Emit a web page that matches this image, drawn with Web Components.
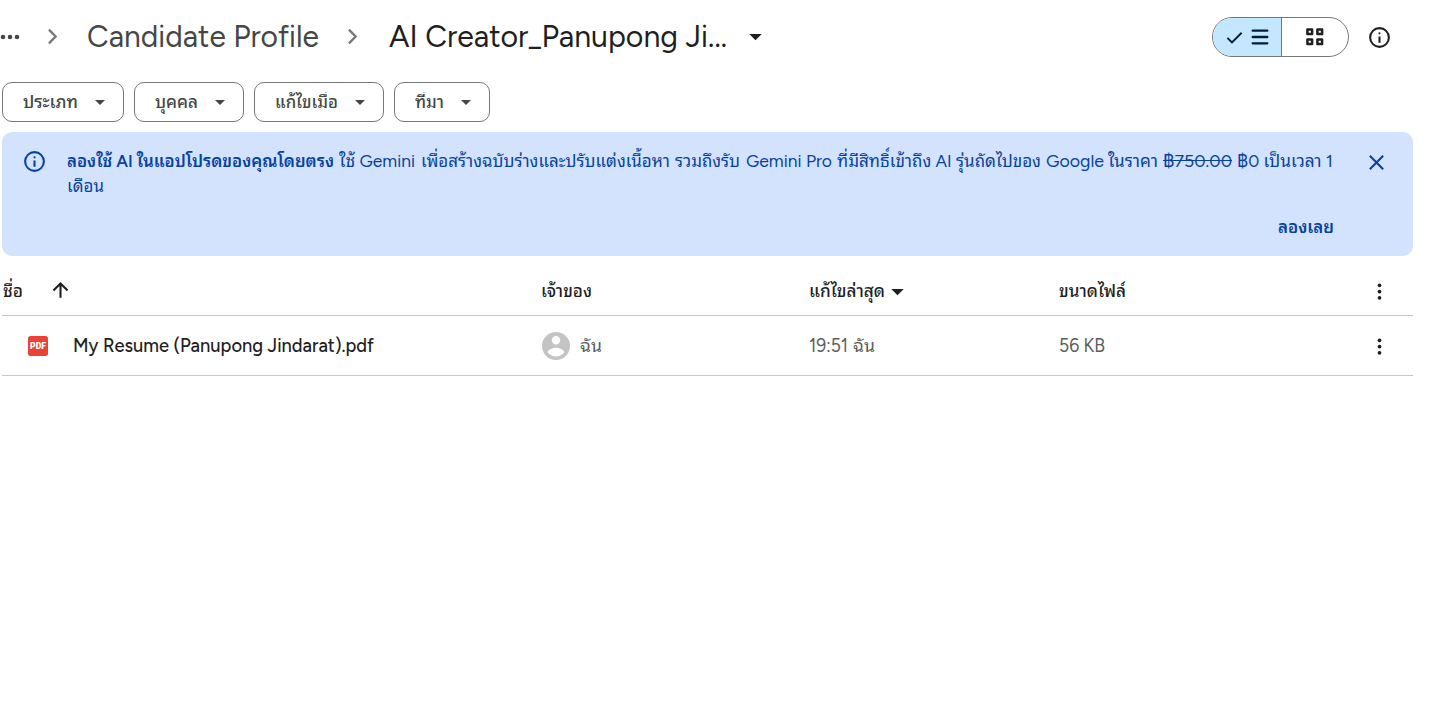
<!DOCTYPE html>
<html lang="th">
<head>
<meta charset="utf-8">
<title>Drive</title>
<style>
html,body{margin:0;background:#fff;width:1434px;height:704px;overflow:hidden}
body{font-family:Figtree,Inter,"Noto Sans Thai Looped","Noto Looped Thai",Loma,Waree,Garuda,"Noto Sans",sans-serif;font-size:17.5px;line-height:25px;color:#1f1f1f}
</style>
</head>
<body>
<drive-app></drive-app>
<script>
const define=(name,html,setup)=>customElements.define(name,class extends HTMLElement{
  connectedCallback(){
    if(this.shadowRoot)return;
    const t=document.createElement('template');
    t.innerHTML=html;
    this.attachShadow({mode:'open'}).append(t.content.cloneNode(true));
    if(setup)setup(this,this.shadowRoot);
  }
});

/* Text run that keeps a fixed advance width whichever font renders it. */
define('fit-text',`<style>
:host{display:block;white-space:nowrap;flex:none}
span{display:inline-block;vertical-align:top;transform-origin:0 50%}
</style><span><slot></slot></span>`,(el,root)=>{
  const w=+el.getAttribute('w'),s=root.querySelector('span');
  const n=s.getBoundingClientRect().width;
  el.style.width=w+'px';
  if(n)s.style.transform='scaleX('+w/n+')';
});

const icons={
  chevron:'<path d="M8.6 5.4 15 12l-6.4 6.6" fill="none" stroke="currentColor" stroke-width="2.2"/>',
  caret:'<path d="M6 9.5h12l-6 6z"/>',
  dots:'<circle cx="5" cy="12" r="2.3"/><circle cx="12" cy="12" r="2.3"/><circle cx="19" cy="12" r="2.3"/>',
  more:'<circle cx="12" cy="6" r="1.8"/><circle cx="12" cy="12" r="1.8"/><circle cx="12" cy="18" r="1.8"/>',
  info:'<path d="M11 17h2v-6h-2v6zm1-8q.43 0 .71-.29T13 8t-.29-.71T12 7t-.71.29T11 8t.29.71T12 9zm0 13a10 10 0 1 1 0-20 10 10 0 0 1 0 20zm0-2a8 8 0 1 0 0-16 8 8 0 0 0 0 16z"/>',
  check:'<path d="m3 12.4 5.8 5.800L21 6" fill="none" stroke="currentColor" stroke-width="2.3"/>',
  list:'<path d="M4 5.1h16M4 12h16M4 18.9h16" fill="none" stroke="currentColor" stroke-width="2.5" stroke-linecap="round"/>',
  grid:'<path d="M4.4 4.4h4.700v4.700H4.400zM14.400 4.400h4.700v4.700h-4.700zM4.400 14.400h4.700v4.700H4.400zM14.400 14.400h4.700v4.700h-4.700z" fill="none" stroke="currentColor" stroke-width="2.5" stroke-linejoin="round"/>',
  close:'<path d="m5.6 5.6 12.8 12.8M18.4 5.6 5.6 18.4" fill="none" stroke="currentColor" stroke-width="2"/>',
  up:'<path d="M12 19V5.500M5.200 12l6.800-6.800 6.800 6.800" fill="none" stroke="currentColor" stroke-width="2"/>',
  person:'<path fill-rule="evenodd" d="M12 0a12 12 0 1 0 0 24 12 12 0 0 0 0-24zm0 3.5a3.6 3.6 0 1 1 0 7.2 3.6 3.6 0 0 1 0-7.2zM12 21c-3 0-5.600-1.400-7.200-3.600C4.900 15 9.600 13.500 12 13.500s7.100 1.500 7.200 3.900C17.600 19.600 15 21 12 21z"/>'
};
define('drive-icon',`<style>
:host{display:block;flex:none;width:var(--s,25px);height:var(--s,25px)}
svg{display:block;width:100%;height:100%;fill:currentColor}
</style><svg viewBox="0 0 24 24"></svg>`,(el,root)=>{root.querySelector('svg').innerHTML=icons[el.getAttribute('name')];});

define('bread-crumbs',`<style>
:host{display:flex;align-items:center;height:73px;font:400 31.5px/40px Figtree,Lato,sans-serif;color:#444746}
fit-text{margin-bottom:2px}
.a{--s:24px;margin-left:-2px}
.c{--s:25px;color:#757775}
.t{color:#1f1f1f}
</style>
<drive-icon class="a" name="dots"></drive-icon>
<drive-icon class="c" name="chevron" style="margin-left:18px"></drive-icon>
<fit-text w="232" style="margin-left:22px">Candidate Profile</fit-text>
<drive-icon class="c" name="chevron" style="margin-left:21px"></drive-icon>
<fit-text class="t" w="338" style="margin-left:24px">AI Creator_Panupong Ji...</fit-text>
<drive-icon class="t" name="caret" style="margin-left:16px"></drive-icon>`);

define('view-toggle',`<style>
:host{display:flex;box-sizing:border-box;width:137px;height:40px;border:1px solid #747775;border-radius:20px;overflow:hidden}
div{display:flex;align-items:center;justify-content:center;flex:1}
.on{background:#c2e7ff;color:#001d35;border-right:1px solid #747775;gap:5px;--s:22px;padding-left:2px}
.off{--s:24px}
</style>
<div class="on"><drive-icon name="check" style="--s:19px"></drive-icon><drive-icon name="list"></drive-icon></div>
<div class="off"><drive-icon name="grid"></drive-icon></div>`);

/* The label box is one line tall and clips what rises above it. */
define('filter-chip',`<style>
:host{display:flex;align-items:center;justify-content:space-between;box-sizing:border-box;height:40px;border:1px solid #747775;border-radius:10px;padding:0 13px 0 20px;color:#444746;font-weight:500}
.l{line-height:20px;height:20px;clip-path:inset(0 0 -4px 0)}
</style><div class="l"><slot></slot></div><drive-icon name="caret" style="--s:20px"></drive-icon>`);

define('promo-banner',`<style>
:host{display:grid;grid-template-columns:25px 1270px 25px;box-sizing:border-box;width:1411px;height:124px;margin:10px 0 0 2px;padding:17px 0 0 20px;background:#d3e3fd;border-radius:10px;color:#0842a0}
.body{margin:-1px 0 0 20px}
.ln{display:flex;height:25px}
.cta{display:flex;justify-content:flex-end;margin-top:16px;font-weight:600;width:1267px}
b{font-weight:600}
</style>
<drive-icon name="info"></drive-icon>
<div class="body">
<div class="ln"><fit-text w="267"><b>ลองใช้ AI ในแอปโปรดของคุณโดยตรง</b></fit-text><fit-text w="76" style="margin-left:5px">ใช้ Gemini</fit-text><fit-text w="249" style="margin-left:6px">เพื่อสร้างฉบับร่างและปรับแต่งเนื้อหา</fit-text><fit-text w="65" style="margin-left:5px">รวมถึงรับ</fit-text><fit-text w="86" style="margin-left:6px">Gemini Pro</fit-text><fit-text w="204" style="margin-left:5px">ที่มีสิทธิ์เข้าถึง AI รุ่นถัดไปของ</fit-text><fit-text w="58" style="margin-left:5px">Google</fit-text><fit-text w="50" style="margin-left:4px">ในราคา</fit-text><fit-text w="69" style="margin-left:5px"><s>฿750.00</s></fit-text><fit-text w="96" style="margin-left:5px">฿0 เป็นเวลา 1</fit-text></div>
<div class="ln"><fit-text w="37">เดือน</fit-text></div>
<div class="cta"><fit-text w="56">ลองเลย</fit-text></div>
</div>
<drive-icon name="close" style="margin:1px 0 0 47px"></drive-icon>`);

define('file-table',`<style>
:host{display:block;width:1411px;margin-left:2px}
.row{display:grid;grid-template-columns:538px 269px 250px 307px 1fr;align-items:center;box-sizing:border-box;height:60px;border-bottom:1px solid #c7c7c7;color:#5b5e5c}
.head{color:#1f1f1f;font-weight:500;padding-top:10px}
.cell{display:flex;align-items:center}
.m{color:#1f1f1f;--s:25px;margin:1px 0 0 .5px}
.latin{font-size:18.500px}
.pdf{display:flex;align-items:center;justify-content:center;width:20px;height:20px;border-radius:2.5px;background:#ea4335;color:#fff;font:900 9.5px/20px Roboto,sans-serif;margin-left:26px}
</style>
<div class="row head">
<div class="cell"><fit-text w="20" style="margin-left:1px">ชื่อ</fit-text><drive-icon name="up" style="margin-left:25px"></drive-icon></div>
<div class="cell"><fit-text w="51" style="margin-left:.5px">เจ้าของ</fit-text></div>
<div class="cell"><fit-text w="76">แก้ไขล่าสุด</fit-text><drive-icon name="caret" style="margin:1px 0 0"></drive-icon></div>
<div class="cell"><fit-text w="67">ขนาดไฟล์</fit-text></div>
<drive-icon class="m" name="more"></drive-icon>
</div>
<div class="row">
<div class="cell"><div class="pdf"><fit-text w="16">PDF</fit-text></div><fit-text class="latin" w="301" style="margin-left:25px;color:#1f1f1f;font-weight:500">My Resume (Panupong Jindarat).pdf</fit-text></div>
<div class="cell"><drive-icon name="person" style="--s:28px;color:#c4c4c4;margin-left:2px"></drive-icon><fit-text w="22" style="margin-left:10px">ฉัน</fit-text></div>
<div class="cell"><fit-text class="latin" w="39">19:51</fit-text><fit-text w="22" style="margin-left:5px">ฉัน</fit-text></div>
<div class="cell"><fit-text class="latin" w="46">56 KB</fit-text></div>
<drive-icon class="m" name="more"></drive-icon>
</div>`);

define('drive-app',`<style>
:host{display:block}
.top{display:flex;justify-content:space-between;height:74px}
.tools{display:flex;align-items:center;gap:18px;padding-right:42px}
.chips{display:flex;gap:10px;padding:8px 0 0 2px}
</style>
<div class="top"><bread-crumbs></bread-crumbs><div class="tools"><view-toggle></view-toggle><drive-icon name="info"></drive-icon></div></div>
<div class="chips">
<filter-chip style="width:122px"><fit-text w="55">ประเภท</fit-text></filter-chip>
<filter-chip style="width:110px"><fit-text w="43">บุคคล</fit-text></filter-chip>
<filter-chip style="width:130px"><fit-text w="63">แก้ไขเมื่อ</fit-text></filter-chip>
<filter-chip style="width:96px"><fit-text w="29">ที่มา</fit-text></filter-chip>
</div>
<promo-banner></promo-banner>
<file-table></file-table>`);
</script>
</body>
</html>
